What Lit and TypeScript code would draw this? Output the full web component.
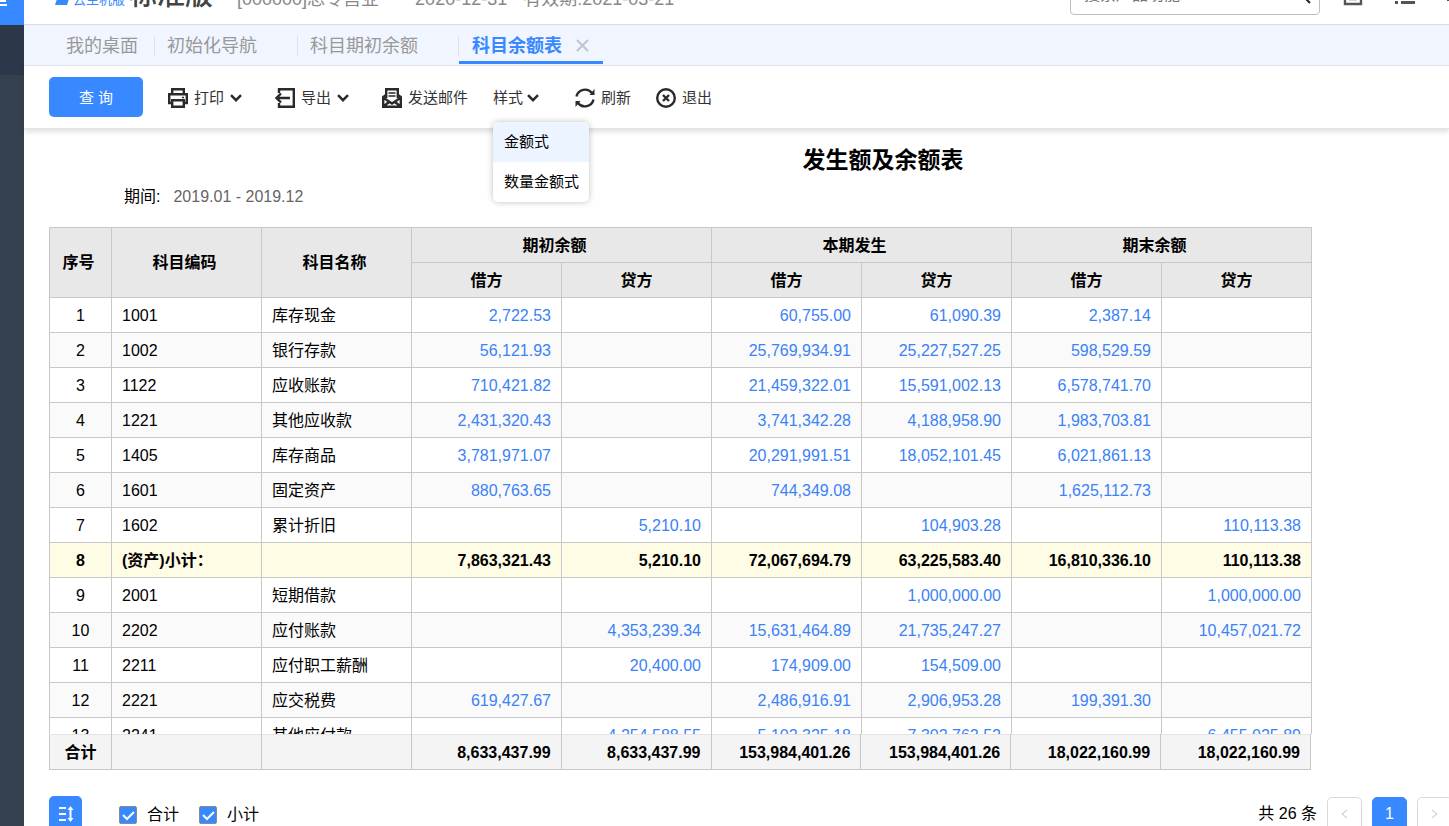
import { LitElement, html, css, svg } from "lit";
import { customElement, state } from "lit/decorators.js";

type Row = { no: string; code: string; name: string; v: string[]; sub?: boolean };

const ROWS: Row[] = [
  { no: "1", code: "1001", name: "库存现金", v: ["2,722.53", "", "60,755.00", "61,090.39", "2,387.14", ""] },
  { no: "2", code: "1002", name: "银行存款", v: ["56,121.93", "", "25,769,934.91", "25,227,527.25", "598,529.59", ""] },
  { no: "3", code: "1122", name: "应收账款", v: ["710,421.82", "", "21,459,322.01", "15,591,002.13", "6,578,741.70", ""] },
  { no: "4", code: "1221", name: "其他应收款", v: ["2,431,320.43", "", "3,741,342.28", "4,188,958.90", "1,983,703.81", ""] },
  { no: "5", code: "1405", name: "库存商品", v: ["3,781,971.07", "", "20,291,991.51", "18,052,101.45", "6,021,861.13", ""] },
  { no: "6", code: "1601", name: "固定资产", v: ["880,763.65", "", "744,349.08", "", "1,625,112.73", ""] },
  { no: "7", code: "1602", name: "累计折旧", v: ["", "5,210.10", "", "104,903.28", "", "110,113.38"] },
  { no: "8", code: "(资产)小计：", name: "", v: ["7,863,321.43", "5,210.10", "72,067,694.79", "63,225,583.40", "16,810,336.10", "110,113.38"], sub: true },
  { no: "9", code: "2001", name: "短期借款", v: ["", "", "", "1,000,000.00", "", "1,000,000.00"] },
  { no: "10", code: "2202", name: "应付账款", v: ["", "4,353,239.34", "15,631,464.89", "21,735,247.27", "", "10,457,021.72"] },
  { no: "11", code: "2211", name: "应付职工薪酬", v: ["", "20,400.00", "174,909.00", "154,509.00", "", ""] },
  { no: "12", code: "2221", name: "应交税费", v: ["619,427.67", "", "2,486,916.91", "2,906,953.28", "199,391.30", ""] },
  { no: "13", code: "2241", name: "其他应付款", v: ["", "4,254,588.55", "5,102,325.18", "7,302,762.52", "", "6,455,025.89"] },
];

const TOTALS = ["8,633,437.99", "8,633,437.99", "153,984,401.26", "153,984,401.26", "18,022,160.99", "18,022,160.99"];
const GROUPS = ["期初余额", "本期发生", "期末余额"];

const stroke = (body: unknown) => html`<svg class="icon" viewBox="0 0 20 20" fill="none" stroke="currentColor" stroke-width="2.400" aria-hidden="true">${body}</svg>`;

const ICONS = {
  print: stroke(svg`<path d="M4.200 6V1.200h11.600V6M4.200 15H1.200V6.200h17.600V15h-3M4.200 12.200h11.600v6.600H4.200z"/><path d="M14 9.500h2" stroke-width="1.500"/>`),
  export: stroke(svg`<path d="M4 5V1.200h14.800v17.600H4V15M15 10H2M6 5.500L1.500 10 6 14.500"/>`),
  mail: stroke(svg`<path d="M4.200 10V1.200h11.600V10M4 7L1.200 9v9.800h17.600V9L16 7M1 9.500l9 6 9-6M1.500 18.500l6-5M18.500 18.500l-6-5"/><path d="M6.500 5h7M6.500 8h7" stroke-width="1.300"/>`),
  refresh: stroke(svg`<path d="M1.500 8.500A8.800 8.800 0 0 1 17 5M18.500 11.500A8.800 8.800 0 0 1 3 15"/><path d="M19.500 1v6h-5zM.5 19v-6h5z" fill="currentColor" stroke="none"/>`),
  exit: stroke(svg`<circle cx="10" cy="10" r="8.800"/><path d="M7 7l6 6M13 7l-6 6"/>`),
};

const caret = html`<svg class="caret" viewBox="0 0 12 8" fill="none" stroke="currentColor" stroke-width="2.500" aria-hidden="true"><path d="M1 1.200l5 5 5-5"/></svg>`;

@customElement("app-root")
export class AppRoot extends LitElement {
  static styles = css`
    :host {
      display: flex;
      height: 100vh;
      overflow: hidden;
      background: #fff;
      color: #000;
      font: 16px/24px "Liberation Sans", "Noto Sans CJK SC", sans-serif;
    }
    * { box-sizing: border-box; }
    button, input { font: inherit; color: inherit; }
    button { border: 0; padding: 0; background: none; cursor: pointer; }
    .rail { flex: none; width: 24px; background: #36414f; }
    .rail-logo { display: block; height: 25px; background: #3888ff; overflow: hidden; }
    .rail-logo svg { display: block; width: 24px; height: 25px; }
    .rail-active { height: 50px; background: #2d374a; }
    .main { flex: 1; min-width: 0; display: flex; flex-direction: column; }

    .top {
      flex: none; height: 25px; display: flex; align-items: flex-end; overflow: hidden;
      border-bottom: 1px solid #dcdcdc; color: #888; font-size: 18px; padding-left: 31px;
    }
    .top > * { flex: none; }
    .brand { display: flex; align-items: flex-end; color: #3888ff; font-size: 13px; line-height: 16px; padding-bottom: 16px; gap: 4px; }
    .brand svg { width: 14px; height: 6px; margin-bottom: 3px; }
    .edition { color: #444; font-size: 28px; line-height: 32px; font-weight: 500; margin-left: 4px; padding-bottom: 12px; }
    .info { white-space: pre; line-height: 24px; padding-bottom: 13px; }
    .org { margin-left: 24px; }
    .date { margin-left: 36px; }
    .valid { margin-left: 16px; }
    .search { margin-left: auto; width: 250px; height: 40px; margin-bottom: 9px; border: 1px solid #bfbfbf; border-radius: 4px; display: flex; align-items: center; padding: 0 8px 0 13px; }
    .search input { flex: 1; min-width: 0; border: 0; outline: 0; padding: 0; font-size: 16px; background: none; }
    .search input::placeholder { color: #757575; }
    .search svg { width: 18px; height: 18px; color: #222; }
    .tool { width: 20px; height: 20px; color: #555; margin: 0 0 18px 23px; }
    .tool + .tool { margin-left: 32px; }
    .tool:last-child { margin-right: -18px; }
    .tool svg { display: block; width: 20px; height: 20px; }

    .tabs { flex: none; height: 41px; display: flex; align-items: center; background: #f0f5ff; border-bottom: 1px solid #e1e6ea; padding: 2px 0 0 30px; font-size: 18px; color: #999; }
    .tab { height: 20px; display: flex; align-items: center; padding: 0 16px 0 12px; border-right: 1px solid #dde3ec; white-space: nowrap; }
    .tab.wide { padding-right: 40px; }
    .tab.on { height: 37px; align-self: flex-start; border: 0; border-bottom: 3px solid #3888ff; padding: 3px 14px 0 13px; color: #3888ff; font-weight: 700; gap: 14px; }
    .tab.on svg { width: 13px; height: 13px; display: block; color: #c0c4cc; }

    .bar { flex: none; position: relative; height: 63px; display: flex; align-items: center; padding-left: 25px; border-bottom: 1px solid #e4e4e4; box-shadow: 0 3px 5px rgba(0, 0, 0, 0.12); font-size: 15px; color: #333; }
    .query { width: 94px; height: 40px; padding-top: 1px; border-radius: 5px; background: #3888ff; color: #fff; margin-right: 25px; white-space: pre; }
    .act { display: flex; align-items: center; gap: 6px; white-space: nowrap; height: 40px; padding-top: 2px; }
    .icon { width: 20px; height: 20px; display: block; color: #2a2a2a; }
    .caret { width: 12px; height: 8px; color: #2a2a2a; }
    .g1 { margin-right: 33px; }
    .g2 { margin-right: 36px; }
    .g3 { margin-right: 25px; }
    .act.tight { gap: 4px; }
    .pick { position: relative; }
    .menu { position: absolute; z-index: 5; top: 45px; left: 0; width: 96px; margin: 0; padding: 0; list-style: none; border-radius: 5px; overflow: hidden; background: #fff; box-shadow: 0 0 6px rgba(0, 0, 0, 0.25); color: #000; }
    .menu button { display: block; width: 100%; height: 40px; text-align: left; padding-left: 11px; white-space: nowrap; }
    .menu button.sel { background: #ecf4ff; }

    .report { flex: none; padding: 15px 137px 0 25px; }
    .title { margin: 0 -137px 9px 0; padding-left: 268px; font-size: 23px; line-height: 32px; text-align: center; }
    .period { display: flex; gap: 13px; padding-left: 75px; margin-bottom: 18px; }
    .period span { color: #666; }

    .grid { height: 543px; overflow: hidden; display: flex; flex-direction: column; }
    .scroll { flex: 1; min-height: 0; overflow: hidden; }
    table { width: 100%; table-layout: fixed; border-collapse: collapse; }
    .c-no { width: 62px; }
    th, td { height: 35px; padding: 2px 10px 0; border: 1px solid #c8c8c8; line-height: 24px; text-align: left; white-space: nowrap; }
    th { background: #e8e8e8; text-align: center; }
    th[rowspan] { padding: 0 14px 0 10px; }
    th[colspan] { padding-right: 24px; }
    .no { text-align: center; }
    .num { text-align: right; color: #3a82f7; }
    tbody tr:nth-child(even) { background: #fafafa; }
    tbody tr.sub { background: #fffce6; font-weight: 700; }
    .sub .num, .total .num { color: #000; }
    .total { flex: none; width: calc(100% - 1px); font-weight: 700; background: #f4f4f4; }
    .total td { border-top-color: #e4e4e4; }

    .foot { display: flex; align-items: center; padding: 26px 0 0 25px; }
    .sort { width: 33px; height: 36px; border-radius: 5px; background: #3888ff; color: #fff; margin-right: 37px; }
    .sort svg { display: block; width: 16px; height: 16px; margin: auto; }
    .check { display: flex; align-items: center; gap: 10px; margin-right: 20px; padding-top: 2px; }
    .check input { appearance: none; width: 18px; height: 18px; margin: 0; border: 1px solid #8c8c8c; border-radius: 2px; background: #fff; }
    .check input:checked { background: #3888ff url("data:image/svg+xml,%3Csvg xmlns='http://www.w3.org/2000/svg' viewBox='0 0 16 16'%3E%3Cpath d='M3 8l4 4 7-7' fill='none' stroke='white' stroke-width='2'/%3E%3C/svg%3E") center / 16px; }
    .pages { margin-left: auto; margin-right: -3px; display: flex; align-items: center; gap: 10px; }
    .page { width: 35px; height: 35px; border: 1px solid #d9d9d9; border-radius: 5px; background: #fff; color: #c0c0c0; }
    .page svg { display: block; width: 9px; height: 10px; margin: auto; }
    .page.cur { background: #3888ff; border-color: #3888ff; color: #fff; }
  `;

  @state() private mode = "金额式";

  private cells(values: string[]) {
    return values.map((v) => html`<td class="num">${v}</td>`);
  }

  private columns() {
    return html`<colgroup><col class="c-no" /><col /><col />${TOTALS.map(() => html`<col />`)}</colgroup>`;
  }

  render() {
    return html`
      <nav class="rail" aria-label="主导航">
        <a class="rail-logo" href="#" aria-label="首页"><svg viewBox="0 0 24 25" fill="none" stroke="#fff" stroke-width="2"><path d="M0 1h6M0 5h7"/></svg></a>
        <div class="rail-active"></div>
      </nav>
      <div class="main">
        <header class="top">
          <div class="brand"><svg viewBox="0 0 14 6"><path d="M2 0h12l-2 6H0z" fill="currentColor"/></svg><span>云主机版</span></div>
          <div class="edition">标准版</div>
          <div class="info org">[000000]总专营业</div>
          <div class="info date">2020-12-31</div>
          <div class="info valid">有效期:2021-03-21</div>
          <label class="search">
            <input aria-label="搜索" placeholder="搜索产品功能" />
            <svg viewBox="0 0 18 18" fill="none" stroke="currentColor" stroke-width="2"><circle cx="8" cy="8" r="5"/><path d="M12 12l5 5"/></svg>
          </label>
          <button class="tool" aria-label="日历"><svg viewBox="0 0 20 20" fill="none" stroke="currentColor" stroke-width="2.400"><path d="M2 3h16v15H2zM6 13h8M10 8v6"/></svg></button>
          <button class="tool" aria-label="列表"><svg viewBox="0 0 20 20" fill="none" stroke="currentColor" stroke-width="3"><path d="M0 16.500h3M6 16.500h14M0 10h3M6 10h14"/></svg></button>
          <button class="tool" aria-label="消息"><svg viewBox="0 0 20 20" fill="none" stroke="currentColor" stroke-width="2"><path d="M0 14h20M4 14V5h12v9"/></svg></button>
        </header>
        <nav class="tabs">
          <button class="tab">我的桌面</button>
          <button class="tab wide">初始化导航</button>
          <button class="tab wide">科目期初余额</button>
          <button class="tab on">科目余额表<svg viewBox="0 0 13 13" fill="none" stroke="currentColor" stroke-width="2"><path d="M1 1l11 11M12 1L1 12"/></svg></button>
        </nav>
        <div class="bar">
          <button class="query">查 询</button>
          <button class="act g1">${ICONS.print}<span>打印</span>${caret}</button>
          <button class="act g1">${ICONS.export}<span>导出</span>${caret}</button>
          <button class="act g3">${ICONS.mail}<span>发送邮件</span></button>
          <div class="pick g2">
            <button class="act tight">样式${caret}</button>
            <ul class="menu">
              ${["金额式", "数量金额式"].map((m) => html`<li><button class=${m === this.mode ? "sel" : ""} @click=${() => (this.mode = m)}>${m}</button></li>`)}
            </ul>
          </div>
          <button class="act g3">${ICONS.refresh}<span>刷新</span></button>
          <button class="act">${ICONS.exit}<span>退出</span></button>
        </div>
        <section class="report">
          <h1 class="title">发生额及余额表</h1>
          <div class="period">期间:<span>2019.01 - 2019.12</span></div>
          <div class="grid">
            <div class="scroll">
              <table>
                ${this.columns()}
                <thead>
                  <tr>
                    <th rowspan="2">序号</th><th rowspan="2">科目编码</th><th rowspan="2">科目名称</th>
                    ${GROUPS.map((g) => html`<th colspan="2">${g}</th>`)}
                  </tr>
                  <tr>${GROUPS.map(() => html`<th>借方</th><th>贷方</th>`)}</tr>
                </thead>
                <tbody>
                  ${ROWS.map((r) => html`<tr class=${r.sub ? "sub" : ""}><td class="no">${r.no}</td><td>${r.code}</td><td>${r.name}</td>${this.cells(r.v)}</tr>`)}
                </tbody>
              </table>
            </div>
            <table class="total">
              ${this.columns()}
              <tr><td class="no">合计</td><td></td><td></td>${this.cells(TOTALS)}</tr>
            </table>
          </div>
        </section>
        <footer class="foot">
          <button class="sort" aria-label="排序"><svg viewBox="0 0 16 16" fill="none" stroke="currentColor" stroke-width="2"><path d="M1 2h7M1 8h7M1 14h7M12.500 2v12"/><path d="M12.500 0l3 4h-6zM12.500 16l3-4h-6z" fill="currentColor" stroke="none"/></svg></button>
          <label class="check"><input type="checkbox" checked />合计</label>
          <label class="check"><input type="checkbox" checked />小计</label>
          <div class="pages">
            <span>共 26 条</span>
            <button class="page" aria-label="上一页"><svg viewBox="0 0 9 10" fill="none" stroke="currentColor"><path d="M7 1L2 5l5 4"/></svg></button>
            <button class="page cur">1</button>
            <button class="page" aria-label="下一页"><svg viewBox="0 0 9 10" fill="none" stroke="currentColor"><path d="M2 1l5 4-5 4"/></svg></button>
          </div>
        </footer>
      </div>
    `;
  }
}
